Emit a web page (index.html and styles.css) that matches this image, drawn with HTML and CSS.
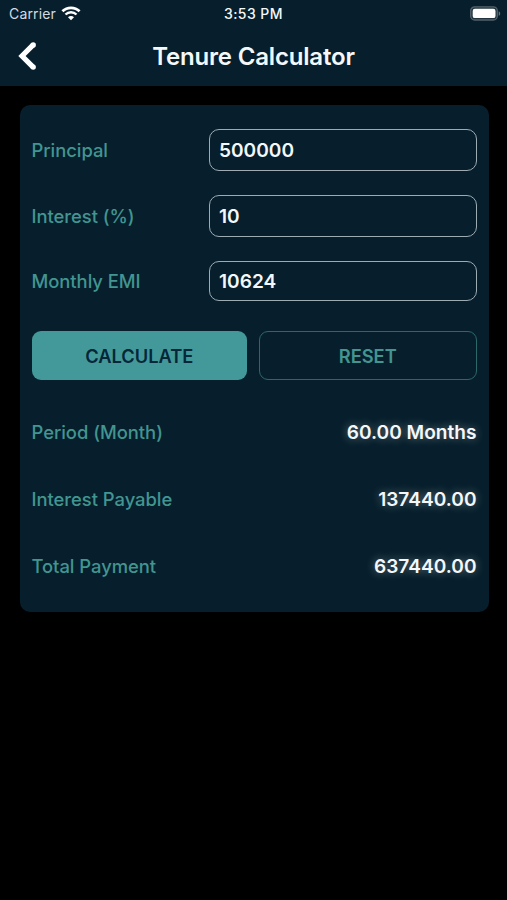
FILE: index.html
```html
<!DOCTYPE html>
<html lang="en">
<head>
    <meta charset="UTF-8">
    <meta name="viewport" content="width=device-width, initial-scale=1.0">
    <title>Tenure Calculator</title>
    <link rel="stylesheet" href="styles.css">
</head>
<body>
    <!-- Status bar and title -->
    <header class="header">
        <div class="status-bar">
            <div class="carrier">
                <span>Carrier</span>
                <svg class="wifi" width="20" height="15" viewBox="0 0 20 15">
                    <path d="M1.4 5.3a12.3 12.3 0 0 1 17.2 0" fill="none" stroke="#fff" stroke-width="2.7"/>
                    <path d="M4.5 8.5a7.9 7.9 0 0 1 11 0" fill="none" stroke="#fff" stroke-width="2.4"/>
                    <path d="M10 14.3l-3-3.1a4.2 4.2 0 0 1 6 0z" fill="#fff"/>
                </svg>
            </div>
            <div class="time">3:53 PM</div>
            <svg class="battery" width="31" height="15" viewBox="0 0 31 15">
                <rect x="0.7" y="0.8" width="26.6" height="13.2" rx="4" fill="#22353f" stroke="#53626a" stroke-width="1.3"/>
                <rect x="2.7" y="2.8" width="22.8" height="9.3" rx="2.2" fill="#fff"/>
                <path d="M28.7 5.2v4.6c2-.8 2-3.8 0-4.6z" fill="#65737a"/>
            </svg>
        </div>
        <div class="title-bar">
            <button class="back" type="button" aria-label="Back">
                <svg width="20" height="30" viewBox="0 0 20 30">
                    <path d="M15.4 3.6L4 15l11.4 11.4" fill="none" stroke="#fff" stroke-width="5.2" stroke-linejoin="miter"/>
                    <circle cx="15.2" cy="3.9" r="2.7" fill="#fff"/>
                    <circle cx="15.2" cy="26.1" r="2.7" fill="#fff"/>
                </svg>
            </button>
            <h1>Tenure Calculator</h1>
        </div>
    </header>

    <!-- Calculator card -->
    <main class="card">
        <form>
            <div class="field">
                <label for="principal">Principal</label>
                <input type="text" id="principal" value="500000">
            </div>
            <div class="field">
                <label for="interest">Interest (%)</label>
                <input type="text" id="interest" value="10">
            </div>
            <div class="field field-last">
                <label for="emi">Monthly EMI</label>
                <input type="text" id="emi" value="10624">
            </div>
            <div class="buttons">
                <button class="btn btn-calculate" type="button">CALCULATE</button>
                <button class="btn btn-reset" type="button">RESET</button>
            </div>
        </form>

        <!-- Results -->
        <div class="results">
            <div class="result">
                <span class="name">Period (Month)</span>
                <span class="value">60.00 Months</span>
            </div>
            <div class="result">
                <span class="name">Interest Payable</span>
                <span class="value">137440.00</span>
            </div>
            <div class="result">
                <span class="name">Total Payment</span>
                <span class="value">637440.00</span>
            </div>
        </div>
    </main>
</body>
</html>
```
FILE: styles.css
```css
* {
    box-sizing: border-box;
}
body {
    margin: 0;
    background-color: #000;
    color: #f4f8fb;
    font-family: Inter, "Liberation Sans", sans-serif;
}
button, input {
    font-family: inherit;
}

/* Header */
.header {
    height: 86px;
    background-color: #071f2c;
}
.status-bar {
    display: grid;
    grid-template-columns: 1fr auto 1fr;
    align-items: center;
    height: 27px;
    padding: 0 9px;
    font-size: 14px;
}
.carrier {
    display: flex;
    align-items: center;
    gap: 5px;
    color: #d3dbe0;
    letter-spacing: 0.15px;
}
.time {
    font-weight: 500;
    letter-spacing: 0.45px;
}
.battery {
    justify-self: end;
    margin-right: -3px;
}
.title-bar {
    display: grid;
    grid-template-columns: 60px 1fr 60px;
    align-items: center;
    height: 58px;
}
.back {
    display: flex;
    margin-left: 18px;
    padding: 0;
    border: none;
    background: none;
}
.title-bar h1 {
    margin: 0;
    text-align: center;
    font-size: 24px;
    font-weight: 600;
    letter-spacing: -0.18px;
    white-space: nowrap;
}

/* Card */
.card {
    height: 507px;
    margin: 19px 18.5px 0 19.5px;
    padding: 24px 12px 0;
    border-radius: 10px;
    background-color: #071f2c;
}
.field {
    display: flex;
    align-items: center;
    justify-content: space-between;
    height: 42px;
    margin-bottom: 24px;
}
.field label,
.result .name {
    color: #429590;
    font-size: 18.4px;
    font-weight: 550;
    letter-spacing: -0.03px;
}
.field input {
    width: 267.5px;
    height: 42px;
    padding: 0 9px;
    border: 1.5px solid #9eabb2;
    border-radius: 10px;
    outline: none;
    background: none;
    color: #f4f8fb;
    font-size: 19.1px;
    font-weight: 600;
}
.field-last,
.field-last input {
    height: 40px;
}
.field-last {
    margin-bottom: 30px;
}
.buttons {
    display: flex;
    gap: 12px;
}
.btn {
    flex: 1;
    height: 49px;
    border: none;
    border-radius: 9px;
    font-size: 18.3px;
    font-weight: 600;
}
.btn-calculate {
    background-color: #43999a;
    color: #05273a;
}
.btn-reset {
    border: 1.5px solid #2b686b;
    background: none;
    color: #429590;
}

/* Results */
.results {
    padding-top: 18px;
}
.result {
    display: flex;
    align-items: center;
    justify-content: space-between;
    height: 67px;
}
.result .value {
    font-size: 19.1px;
    font-weight: 600;
    text-shadow: 0 0 10px rgba(255, 255, 255, 0.4);
}
```
